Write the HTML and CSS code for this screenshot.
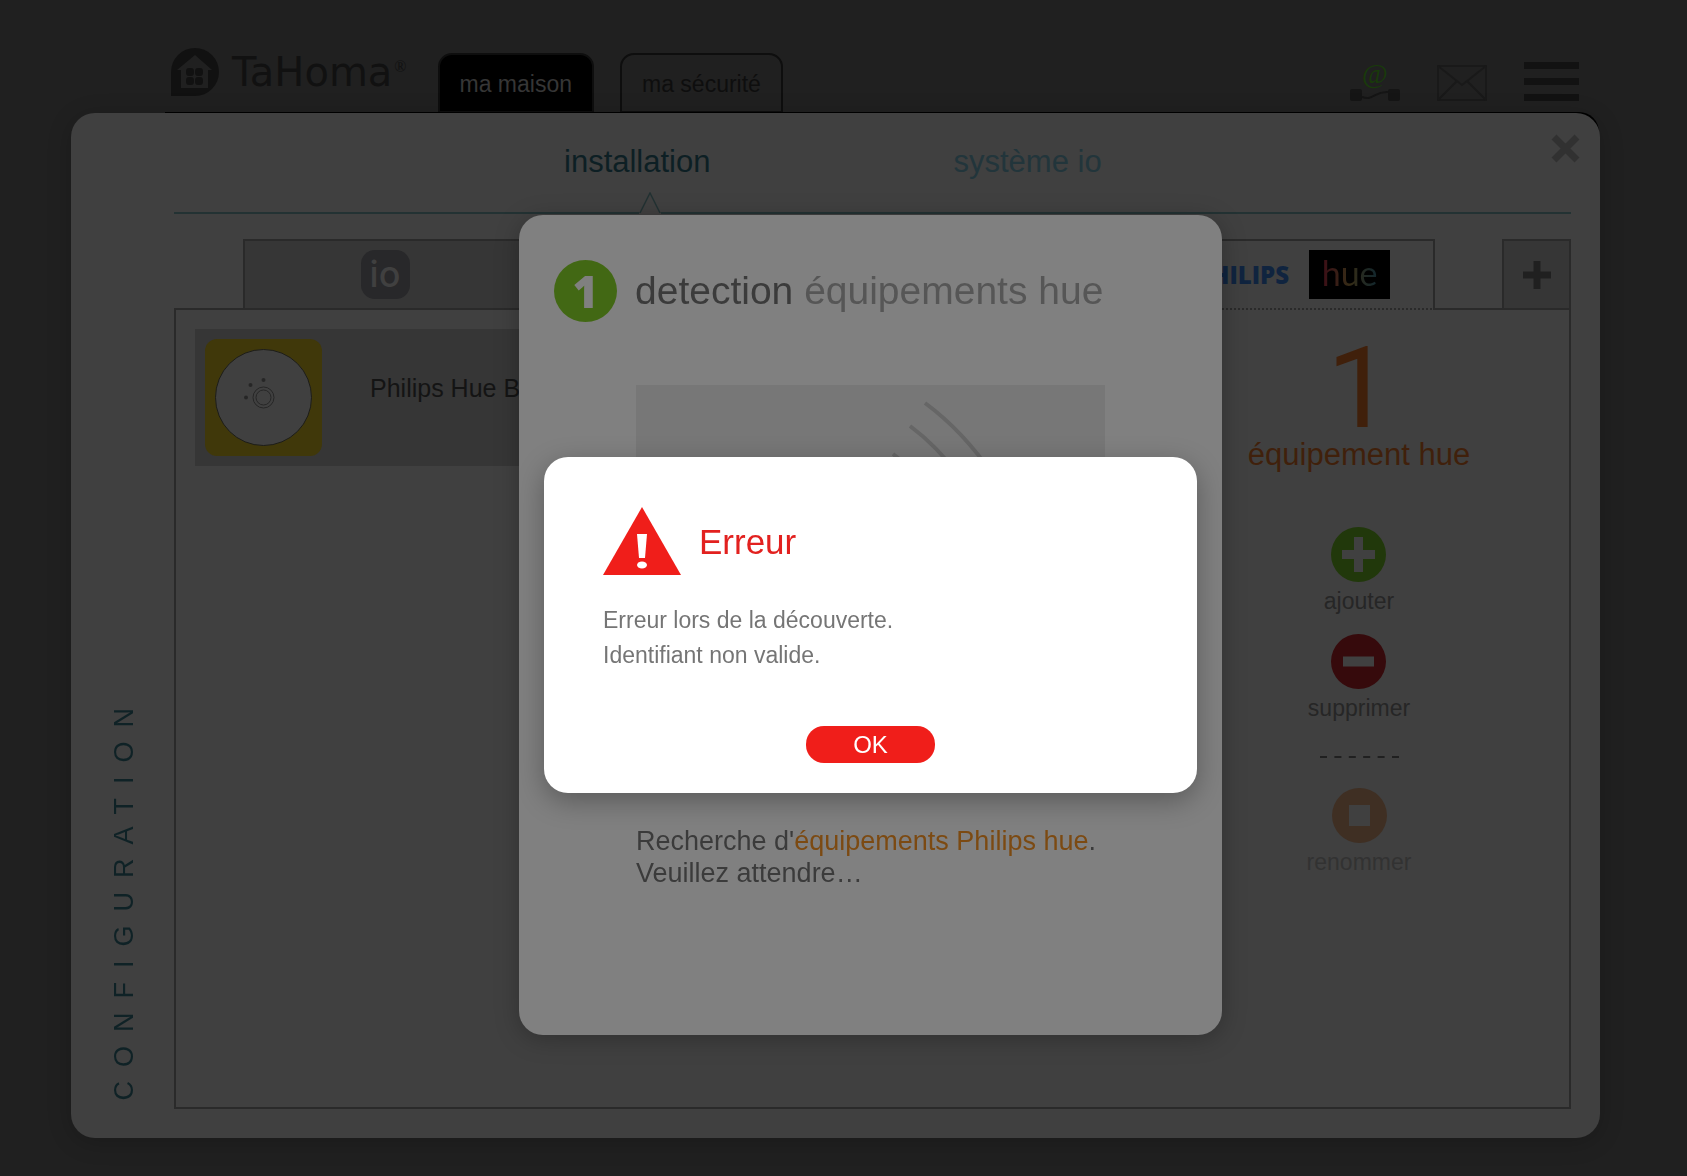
FILE: index.html
```
<!DOCTYPE html>
<html lang="fr">
<head>
    <meta charset="UTF-8">
    <title>TaHoma - Configuration</title>
    <link rel="stylesheet" href="styles.css">
</head>
<body>

<header class="topbar">
    <a class="logo" href="#">
        <svg width="48" height="48" viewBox="0 0 48 48" aria-hidden="true">
            <path d="M0 48V24A24 24 0 0 1 48 24A24 24 0 0 1 24 48Z" fill="#111"/>
            <path d="M24 7L41 22H37V40H10V22H6Z" fill="#202020"/>
            <g fill="#111">
                <rect x="15" y="20" width="8" height="8" rx="3"/>
                <rect x="24" y="20" width="8" height="8" rx="3"/>
                <rect x="15" y="29" width="8" height="8" rx="3"/>
                <rect x="24" y="29" width="8" height="8" rx="3"/>
            </g>
        </svg>
        <span class="logo-name">TaHoma</span><span class="logo-mark">®</span>
    </a>
    <nav class="main-tabs">
        <a class="main-tab active" href="#">ma maison</a>
        <a class="main-tab" href="#">ma sécurité</a>
    </nav>
    <div class="tools">
        <button type="button" class="tool connection" aria-label="Connexion">
            <span class="at">@</span>
            <svg width="50" height="12" viewBox="0 0 50 12">
                <rect width="12" height="12" rx="2" fill="#151515"/>
                <rect x="38" width="12" height="12" rx="2" fill="#151515"/>
                <path d="M12 8C24 12 24 2 38 3" fill="none" stroke="#151515" stroke-width="2"/>
            </svg>
        </button>
        <button type="button" class="tool" aria-label="Messages">
            <svg width="50" height="36" viewBox="0 0 50 36" fill="none" stroke="#191919" stroke-width="2">
                <rect x="1" y="1" width="48" height="34"/>
                <path d="M1 1L25 20L49 1M1 35L20 16M49 35L30 16"/>
            </svg>
        </button>
        <button type="button" class="tool" aria-label="Menu">
            <svg width="55" height="39" viewBox="0 0 55 39" fill="#121212">
                <rect width="55" height="7"/>
                <rect y="16" width="55" height="7"/>
                <rect y="32" width="55" height="7"/>
            </svg>
        </button>
    </div>
</header>

<main class="panel">
    <div class="side"><h1>CONFIGURATION</h1></div>
    <button type="button" class="close" aria-label="Fermer">
        <svg width="29" height="29" viewBox="0 0 29 29" stroke="#313131" stroke-width="7">
            <path d="M3 3L26 26M26 3L3 26"/>
        </svg>
    </button>

    <div class="content">
        <nav class="sections">
            <a class="section active" href="#">installation
                <svg class="pointer" width="22" height="22" viewBox="0 0 22 22">
                    <path d="M0 21L11 1L22 21V22H0Z" fill="#404040"/>
                    <path d="M1 21L11 1L21 21" fill="none" stroke="#233233" stroke-width="1.5"/>
                </svg>
            </a>
            <a class="section" href="#">système io</a>
        </nav>

        <div class="device-tabs">
            <button type="button" class="device-tab"><span class="io">io</span></button>
            <button type="button" class="device-tab selected">
                <span class="philips">PHILIPS</span>
                <span class="hue"><span>hue</span></span>
            </button>
            <button type="button" class="device-tab add" aria-label="Ajouter un onglet">
                <svg width="28" height="28" viewBox="0 0 28 28" stroke="#202020" stroke-width="7">
                    <path d="M14 0V28M0 14H28"/>
                </svg>
            </button>
        </div>

        <section class="devices">
            <ul class="device-list">
                <li class="device">
                    <svg width="117" height="117" viewBox="0 0 117 117">
                        <rect width="117" height="117" rx="12" fill="#40380a"/>
                        <circle cx="58.5" cy="58.5" r="48" fill="#404040" stroke="#1d1d18"/>
                        <g fill="none" stroke="#262626">
                            <circle cx="58.5" cy="58.5" r="10.5"/>
                            <circle cx="58.5" cy="58.5" r="7.5"/>
                        </g>
                        <g fill="#262626">
                            <circle cx="41" cy="58.5" r="2"/>
                            <circle cx="45.5" cy="46" r="2"/>
                            <circle cx="58.5" cy="41" r="2"/>
                        </g>
                    </svg>
                    <span>Philips Hue Bridge</span>
                </li>
            </ul>

            <aside class="summary">
                <p class="count">1</p>
                <p class="count-label">équipement hue</p>
                <div class="actions">
                    <button type="button" class="action">
                        <svg width="55" height="55" viewBox="0 0 55 55">
                            <circle cx="27.5" cy="27.5" r="27.5" fill="#21380b"/>
                            <path d="M27.5 10V45M11 27.5H44" stroke="#404040" stroke-width="9"/>
                        </svg>
                        ajouter
                    </button>
                    <button type="button" class="action">
                        <svg width="55" height="55" viewBox="0 0 55 55">
                            <circle cx="27.5" cy="27.5" r="27.5" fill="#360a0c"/>
                            <path d="M12 27.5H43" stroke="#404040" stroke-width="10"/>
                        </svg>
                        supprimer
                    </button>
                </div>
                <svg class="dashes" width="79" height="2" viewBox="0 0 79 2">
                    <path d="M0 1H79" stroke="#202020" stroke-width="2" stroke-dasharray="7 7.4"/>
                </svg>
                <button type="button" class="action" disabled>
                    <svg width="55" height="55" viewBox="0 0 55 55">
                        <circle cx="27.5" cy="27.5" r="27.5" fill="#3f2f23"/>
                        <rect x="17" y="17" width="21" height="21" fill="#404040"/>
                    </svg>
                    renommer
                </button>
            </aside>
        </section>
    </div>
</main>

<!-- assistant de detection -->
<div class="layer">
    <section class="wizard">
        <h2 class="wizard-title">
            <span class="step">1</span>
            <span>detection <em>équipements hue</em></span>
        </h2>
        <div class="wizard-body">
            <div class="picture">
                <svg width="469" height="390" viewBox="0 0 469 390" fill="none" stroke="#666" stroke-width="4">
                    <path d="M289 18Q327 46 357 90"/>
                    <path d="M274 41Q300 60 326 94"/>
                    <path d="M257 69Q275 82 290 102"/>
                </svg>
            </div>
            <p>Recherche d'<em>équipements Philips hue</em>.<br>Veuillez attendre…</p>
        </div>
    </section>
</div>

<!-- message d'erreur -->
<div class="layer">
    <section class="alert" role="alertdialog" aria-labelledby="alert-title">
        <div class="alert-head">
            <svg width="78" height="68" viewBox="0 0 78 68" aria-hidden="true">
                <path d="M39 0L78 68H0Z" fill="#f01e1a"/>
                <path d="M34 27H44L42 51H36Z" fill="#fff"/>
                <ellipse cx="39" cy="58" rx="5" ry="3.5" fill="#fff"/>
            </svg>
            <h2 id="alert-title">Erreur</h2>
        </div>
        <p>Erreur lors de la découverte.<br>Identifiant non valide.</p>
        <button type="button" class="ok">OK</button>
    </section>
</div>

</body>
</html>
```
FILE: styles.css
```
* { box-sizing: border-box; }
body { margin: 0; min-height: 100vh; display: flex; flex-direction: column; background-color: #202020; color: #262626; font-family: "Liberation Sans", Arial, sans-serif; font-size: 23px; }
h1, h2, p, ul { margin: 0; padding: 0; font-weight: normal; }
em { font-style: normal; }
a { color: inherit; text-decoration: none; }
button { margin: 0; padding: 0; border: none; background: none; color: inherit; font: inherit; cursor: pointer; }
svg { display: block; }

/* barre du haut */
.topbar { height: 113px; padding: 0 108px 0 171px; display: flex; align-items: flex-end; position: relative; }
.topbar::after { content: ""; position: absolute; left: 165px; right: 88px; top: 112px; height: 40px; border-top-right-radius: 20px; background: #000; }
.logo { display: flex; align-items: center; margin-bottom: 17px; color: #111; }
.logo-name { margin-left: 13px; font-family: "DejaVu Sans", sans-serif; font-size: 40px; line-height: 48px; }
.logo-mark { align-self: flex-start; margin: 11px 0 0 2px; font-family: "Liberation Serif", serif; font-size: 16px; line-height: 16px; }
.main-tabs { display: flex; gap: 26px; margin-left: 31px; }
.main-tab { height: 60px; padding: 15px 20px 0; border: 2px solid #0e0e0e; border-radius: 14px 14px 0 0; color: #0e0e0e; line-height: 28px; }
.main-tab.active { background: #000; color: #363636; }
.tools { display: flex; align-items: flex-end; gap: 37px; margin: 0 0 12px auto; }
.connection { display: flex; flex-direction: column; align-items: center; }
.at { color: #193a0b; font-family: "Liberation Serif", serif; font-size: 28px; line-height: 30px; }

/* panneau de configuration */
.panel { flex: 1; display: flex; position: relative; margin: 0 87px 38px 71px; padding: 0 29px 29px 0; border-radius: 24px; background: #404040; box-shadow: 0 4px 24px rgba(0,0,0,0.2); }
.side { width: 103px; display: flex; align-items: flex-end; justify-content: center; padding: 0 0 9px 2px; }
.side h1 { writing-mode: vertical-rl; transform: rotate(180deg); color: #0f2226; font-size: 27px; line-height: 32px; letter-spacing: 14px; }
.close { position: absolute; top: 21px; right: 20px; }
.content { flex: 1; display: flex; flex-direction: column; }
.sections { display: flex; gap: 243px; height: 101px; padding: 29px 0 0 390px; border-bottom: 2px solid #233233; font-size: 31px; line-height: 40px; }
.section { position: relative; color: #22353b; }
.section.active { color: #0d1f24; }
.pointer { position: absolute; left: 75px; top: 50px; }

.device-tabs { display: flex; margin: 25px 0 -2px 69px; position: relative; }
.device-tab { width: 284px; height: 71px; display: flex; align-items: center; justify-content: center; border: 2px solid #2a2a2a; background: #363636; }
.device-tab.selected { margin-left: auto; gap: 20px; background: #404040; border-bottom-style: dotted; }
.device-tab.add { width: 69px; margin-left: 67px; }
.io { width: 49px; height: 49px; border-radius: 14px; background: #28282a; color: #404040; font-family: Inter, sans-serif; font-size: 36px; font-weight: 500; line-height: 48px; }
.philips { color: #10243f; font-family: "Open Sans", sans-serif; font-size: 24px; font-weight: 800; }
.hue { width: 81px; height: 49px; background: #000; line-height: 46px; }
.hue span { background: linear-gradient(90deg, #3c0e16, #352c16, #10262e); background-clip: text; -webkit-background-clip: text; color: transparent; font-family: Lato, sans-serif; font-size: 34px; font-weight: 400; }

.devices { flex: 1; display: flex; border: 2px solid #2a2a2a; }
.device-list { flex: 1; padding: 19px; list-style: none; }
.device { display: flex; gap: 48px; padding: 10px; background: #363636; color: #141414; font-size: 25px; line-height: 98px; }
.summary { width: 420px; padding-top: 25px; display: flex; flex-direction: column; align-items: center; }
.count { color: #40200b; font-family: Roboto, sans-serif; font-size: 114px; line-height: 106px; }
.count-label { margin-bottom: 58px; color: #40200b; font-size: 31px; line-height: 28px; }
.actions { display: flex; flex-direction: column; gap: 19px; }
.action { display: flex; flex-direction: column; align-items: center; gap: 5px; line-height: 28px; }
.action:disabled { color: #323232; }
.dashes { margin: 34px 0 30px; }

/* fenetres */
.layer { position: fixed; inset: 0; display: flex; align-items: center; justify-content: center; padding: 74px 0 0 54px; }
.wizard { width: 703px; min-height: 820px; padding: 45px 35px; border-radius: 24px; background: #808080; color: #3b3b3b; box-shadow: 0 4px 24px rgba(0,0,0,0.25); }
.wizard-title { display: flex; align-items: center; gap: 18px; font-size: 39px; line-height: 62px; }
.wizard-title em { color: #565656; }
.step { width: 63px; border-radius: 50%; background: #426814; color: #808080; font-family: "Open Sans", sans-serif; font-size: 44px; font-weight: 800; text-align: center; }
.wizard-body { padding: 63px 82px 0; font-size: 27px; line-height: 32px; }
.wizard-body em { color: #7c4a12; }
.picture { height: 390px; margin-bottom: 50px; background: #777; overflow: hidden; }
.alert { width: 653px; padding: 50px 59px 30px; border-radius: 24px; background: #fff; color: #757575; line-height: 35px; box-shadow: 0 8px 28px rgba(0,0,0,0.3); }
.alert-head { display: flex; align-items: center; gap: 18px; margin-bottom: 28px; }
.alert-head h2 { color: #e2211f; font-size: 35px; }
.ok { display: block; width: 129px; margin: 53px auto 0; border-radius: 18px; background: #f01e1a; color: #fff; font-size: 24px; line-height: 37px; }
```
